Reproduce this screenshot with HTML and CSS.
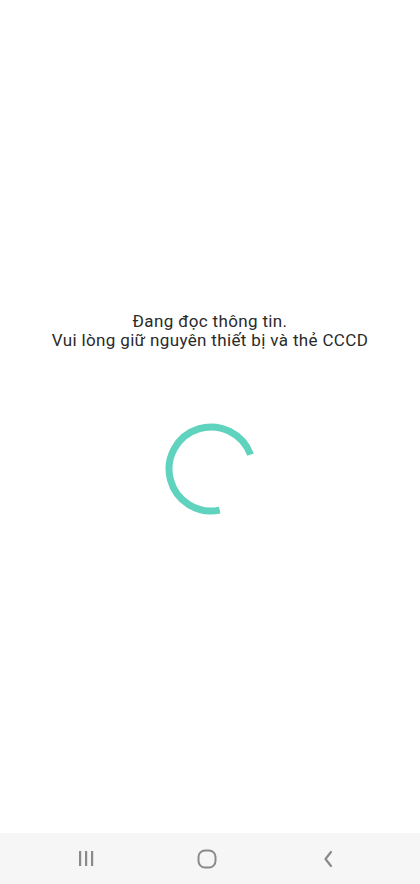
FILE: index.html
```html
<!DOCTYPE html>
<html lang="vi">
<head>
<meta charset="utf-8">
<link rel="stylesheet" href="styles.css">
</head>
<body>
<div class="screen">
  <main class="content">
    <p class="message">Đang đọc thông tin.<br>Vui lòng giữ nguyên thiết bị và thẻ CCCD</p>
    <svg class="spinner" width="96" height="96" viewBox="0 0 96 96">
      <path d="M 87.5 33.6 A 42 42 0 1 0 56.7 89.1" fill="none" stroke="#5fd3bd" stroke-width="7" stroke-linecap="butt"/>
    </svg>
  </main>
  <nav class="navbar">
    <svg class="nav-icon" width="24" height="24" viewBox="0 0 24 24">
      <rect x="5" y="4" width="2.2" height="15" fill="#8a8a8a"/>
      <rect x="11" y="4" width="2.2" height="15" fill="#8a8a8a"/>
      <rect x="17" y="4" width="2.2" height="15" fill="#8a8a8a"/>
    </svg>
    <svg class="nav-icon" width="24" height="24" viewBox="0 0 24 24">
      <rect x="3.5" y="3.5" width="17" height="17" rx="6.5" fill="none" stroke="#8a8a8a" stroke-width="2"/>
    </svg>
    <svg class="nav-icon" width="24" height="24" viewBox="0 0 24 24">
      <path d="M 15 5 L 9.5 12 L 15 19" fill="none" stroke="#8a8a8a" stroke-width="2.2" stroke-linecap="round" stroke-linejoin="round"/>
    </svg>
  </nav>
</div>
</body>
</html>
```
FILE: styles.css
```css
* { box-sizing: border-box; }
html, body {
  margin: 0;
  padding: 0;
  background: #ffffff;
}
.screen {
  width: 420px;
  height: 884px;
  display: flex;
  flex-direction: column;
  font-family: Roboto, "Noto Sans", sans-serif;
}
.content {
  flex: 1;
  display: flex;
  flex-direction: column;
  align-items: center;
  padding-top: 312px;
}
.message {
  margin: 0;
  text-align: center;
  font-size: 17px;
  line-height: 19px;
  letter-spacing: 0.35px;
  color: #2a2a2a;
}
.spinner {
  margin-top: 71px;
  margin-left: 2px;
}
.navbar {
  height: 51px;
  background: #f6f6f6;
  display: flex;
  align-items: center;
  justify-content: space-between;
  padding: 0 80px 0 74px;
}
.nav-icon {
  display: block;
}
```
